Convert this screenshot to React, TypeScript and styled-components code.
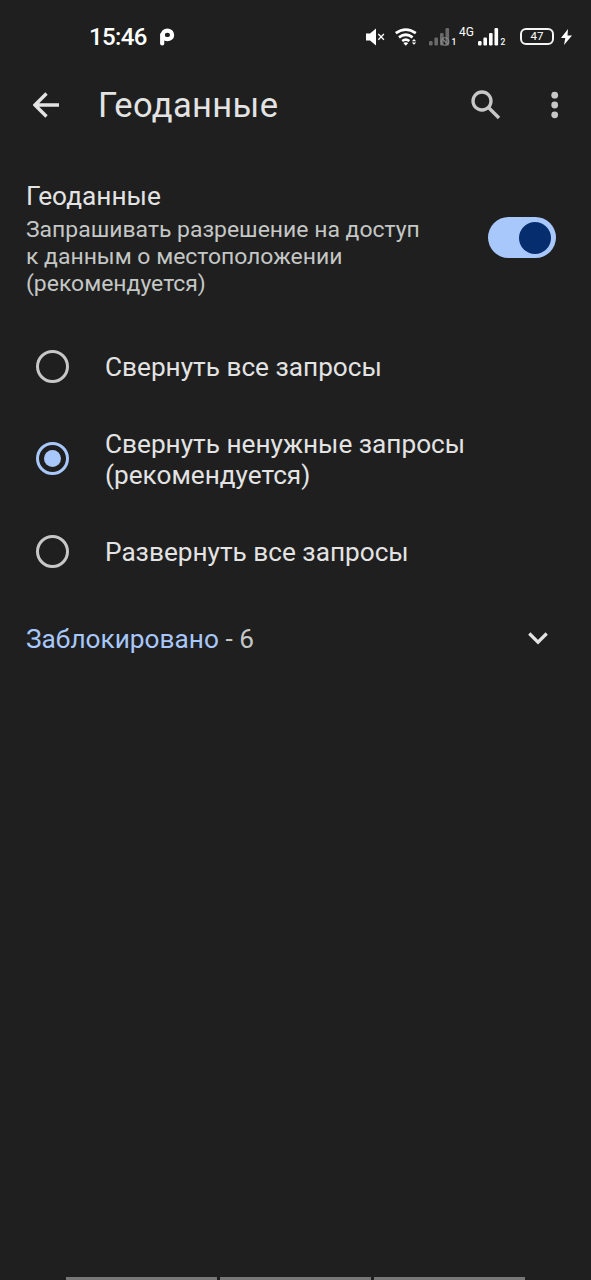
import React from "react";
import styled, { createGlobalStyle } from "styled-components";

const GlobalStyle = createGlobalStyle`
  * { box-sizing: border-box; }
  html, body { margin: 0; padding: 0; background: #1f1f1f; }
  body { font-family: Roboto, "Noto Sans", sans-serif; }
`;

const Screen = styled.div`
  display: flex;
  flex-direction: column;
  width: 591px;
  height: 1280px;
  overflow: hidden;
  background: #1f1f1f;
  color: #e3e3e3;
`;

const StatusBar = styled.header`
  display: flex;
  align-items: center;
  height: 72px;
  padding: 1px 19px 0 89px;
  color: #fff;
`;

const Clock = styled.span`
  width: 70px;
  font-size: 24px;
  line-height: 28px;
  font-weight: 500;
  letter-spacing: -0.6px;
`;

const StatusIcons = styled.div`
  display: flex;
  align-items: center;
  margin-left: auto;
  height: 20px;
`;

const Glyph = styled.svg<{ $gap?: number }>`
  display: block;
  flex: none;
  margin-left: ${(p) => p.$gap ?? 0}px;
`;

const SimIndex = styled.span<{ $width: number }>`
  align-self: flex-end;
  width: ${(p) => p.$width}px;
  padding-left: 1.5px;
  font-size: 8.5px;
  line-height: 9px;
  font-weight: 500;
`;

const NetworkType = styled.span`
  align-self: flex-start;
  width: 19px;
  font-size: 12px;
  line-height: 11px;
`;

const Battery = styled.span`
  display: flex;
  align-items: center;
  justify-content: center;
  width: 34px;
  height: 17px;
  margin-left: 15px;
  border: 2px solid #f4f4f4;
  border-radius: 6px;
  font-size: 11.5px;
  line-height: 13px;
`;

const AppBar = styled.div`
  display: flex;
  align-items: center;
  height: 66px;
  padding: 0 29px 0 33px;
`;

const PageTitle = styled.h1`
  flex: 1;
  margin: 0 0 0 38px;
  font-size: 34.5px;
  line-height: 42px;
  font-weight: 400;
  letter-spacing: 0.35px;
`;

const Permission = styled.section`
  display: flex;
  align-items: flex-start;
  justify-content: space-between;
  height: 160px;
  padding: 43px 35px 0 26px;
`;

const PermissionTitle = styled.h2`
  margin: 0;
  font-size: 26.25px;
  line-height: 31px;
  font-weight: 400;
`;

const PermissionText = styled.p`
  width: 420px;
  margin: 4px 0 0;
  font-size: 22.95px;
  line-height: 27px;
  color: #c4c7c5;
`;

const Switch = styled.button`
  display: flex;
  justify-content: flex-end;
  align-items: center;
  flex: none;
  width: 68px;
  height: 41px;
  margin-top: 36px;
  padding: 0 5px;
  border: 0;
  border-radius: 21px;
  background: #a8c7fa;
`;

const Thumb = styled.span`
  width: 32px;
  height: 32px;
  border-radius: 50%;
  background: #062e6f;
`;

const Options = styled.div`
  display: flex;
  flex-direction: column;
  margin-top: 22px;
`;

const Option = styled.label<{ $height: number }>`
  display: flex;
  align-items: center;
  height: ${(p) => p.$height}px;
  padding: 0 36px;
`;

const Radio = styled.span<{ $checked?: boolean }>`
  display: flex;
  align-items: center;
  justify-content: center;
  flex: none;
  width: 33px;
  height: 33px;
  border: 3px solid ${(p) => (p.$checked ? "#a8c7fa" : "#c7c7c7")};
  border-radius: 50%;

  &::after {
    content: "";
    width: 17px;
    height: 17px;
    border-radius: 50%;
    background: ${(p) => (p.$checked ? "#a8c7fa" : "transparent")};
  }
`;

const OptionLabel = styled.span`
  margin-left: 36px;
  padding-top: 2px;
  font-size: 26.2px;
  line-height: 31px;
`;

const BlockedRow = styled.div`
  display: flex;
  align-items: center;
  justify-content: space-between;
  height: 83px;
  padding: 0 43px 0 26px;
  font-size: 26.25px;
  line-height: 31px;
  color: #c4c7c5;
`;

const BlockedLabel = styled.span`
  padding-top: 2px;
`;

const Accent = styled.span`
  color: #a8c7fa;
`;

const NavHints = styled.footer`
  display: flex;
  justify-content: center;
  gap: 3px;
  margin-top: auto;
`;

const NavHint = styled.span`
  width: 151px;
  height: 3px;
  background: #777;
`;

const SignalBars = ({ disabled }: { disabled?: boolean }) => (
  <Glyph $gap={disabled ? 12 : 0} width="21" height="18" viewBox="0 0 21 18">
    <g fill={disabled ? "#696969" : "#fff"}>
      <rect x="0" y="13" width="3.6" height="4.5" rx="1.2" />
      <rect x="5.4" y="9.5" width="3.6" height="8" rx="1.2" />
      <rect x="11" y="5" width="3.6" height="12.5" rx="1.2" />
      <rect x="16.5" y="0" width="3.6" height="17.5" rx="1.2" />
    </g>
    {disabled && (
      <g fill="none" stroke="#8a8a8a" strokeWidth="1.1">
        <circle cx="16" cy="13.5" r="3.8" />
        <path d="M13.3 10.8l5.4 5.4" />
      </g>
    )}
  </Glyph>
);

export default function App() {
  return (
    <Screen>
      <GlobalStyle />
      <StatusBar>
        <Clock>15:46</Clock>
        <Glyph width="16" height="18" viewBox="0 0 16 18">
          <g fill="none" stroke="#fff" strokeWidth="4.2">
            <path d="M3.2 15.400V6.600" strokeLinecap="round" />
            <ellipse cx="8.400" cy="6.900" rx="4.700" ry="4.300" />
          </g>
        </Glyph>
        <StatusIcons>
          <Glyph width="19" height="18" viewBox="0 0 19 18">
            <path d="M0 5.5h4L10 .5v17l-6-5H0z" fill="#fff" />
            <path d="M12.3 6l5.6 5.8M17.9 6l-5.6 5.8" stroke="#fff" strokeWidth="1.3" />
          </Glyph>
          <Glyph $gap={10} width="22" height="18" viewBox="0 0 22 18">
            <g fill="none" stroke="#fff" strokeWidth="2.7">
              <path d="M.8 5.2Q10.8-2 20.8 5.2" />
              <path d="M4 9.3Q10.8 4.2 17.6 9.3" />
              <path d="M7.2 13Q10.8 10.3 14.4 13" />
            </g>
            <path d="M8.3 15Q10.8 13.5 13.3 15L10.8 17.7z" fill="#fff" />
            <path d="M16.8 13.3l2.2-2.2 2.2 2.2zM16.8 14.6l2.2 2.2 2.2-2.2z" fill="#fff" />
          </Glyph>
          <SignalBars disabled />
          <SimIndex $width={9}>1</SimIndex>
          <NetworkType>4G</NetworkType>
          <SignalBars />
          <SimIndex $width={6}>2</SimIndex>
          <Battery>47</Battery>
          <Glyph $gap={7} width="11" height="16" viewBox="0 0 11 16">
            <path d="M7 0L0 9h4.3L3 16l8-9.5H6.5z" fill="#fff" />
          </Glyph>
        </StatusIcons>
      </StatusBar>

      <AppBar>
        <Glyph width="27" height="26" viewBox="0 0 27 26">
          <path
            d="M26 13H2.5M13.5 1.5L2 13l11.5 11.5"
            fill="none"
            stroke="#e3e3e3"
            strokeWidth="3.4"
          />
        </Glyph>
        <PageTitle>Геоданные</PageTitle>
        <Glyph width="30" height="30" viewBox="0 0 30 30">
          <g fill="none" stroke="#c7c7c7" strokeWidth="3.3">
            <circle cx="11" cy="11" r="9" />
            <path d="M17.5 17.5L28 28" />
          </g>
        </Glyph>
        <Glyph $gap={47} width="14" height="28" viewBox="0 0 14 28">
          <g fill="#c7c7c7">
            <circle cx="6.7" cy="4.2" r="3.4" />
            <circle cx="6.7" cy="14" r="3.4" />
            <circle cx="6.7" cy="23.8" r="3.4" />
          </g>
        </Glyph>
      </AppBar>

      <Permission>
        <div>
          <PermissionTitle>Геоданные</PermissionTitle>
          <PermissionText>
            Запрашивать разрешение на доступ
            <br />к данным о местоположении
            <br />
            (рекомендуется)
          </PermissionText>
        </div>
        <Switch role="switch" aria-checked="true">
          <Thumb />
        </Switch>
      </Permission>

      <Options>
        <Option $height={92}>
          <Radio />
          <OptionLabel>Свернуть все запросы</OptionLabel>
        </Option>
        <Option $height={93}>
          <Radio $checked />
          <OptionLabel>
            Свернуть ненужные запросы
            <br />
            (рекомендуется)
          </OptionLabel>
        </Option>
        <Option $height={92}>
          <Radio />
          <OptionLabel>Развернуть все запросы</OptionLabel>
        </Option>
      </Options>

      <BlockedRow>
        <BlockedLabel>
          <Accent>Заблокировано</Accent> - 6
        </BlockedLabel>
        <Glyph width="20" height="13" viewBox="0 0 20 13">
          <path d="M1.3 1.5L10 10.2l8.7-8.7" fill="none" stroke="#e3e3e3" strokeWidth="3.2" />
        </Glyph>
      </BlockedRow>

      <NavHints>
        <NavHint />
        <NavHint />
        <NavHint />
      </NavHints>
    </Screen>
  );
}
